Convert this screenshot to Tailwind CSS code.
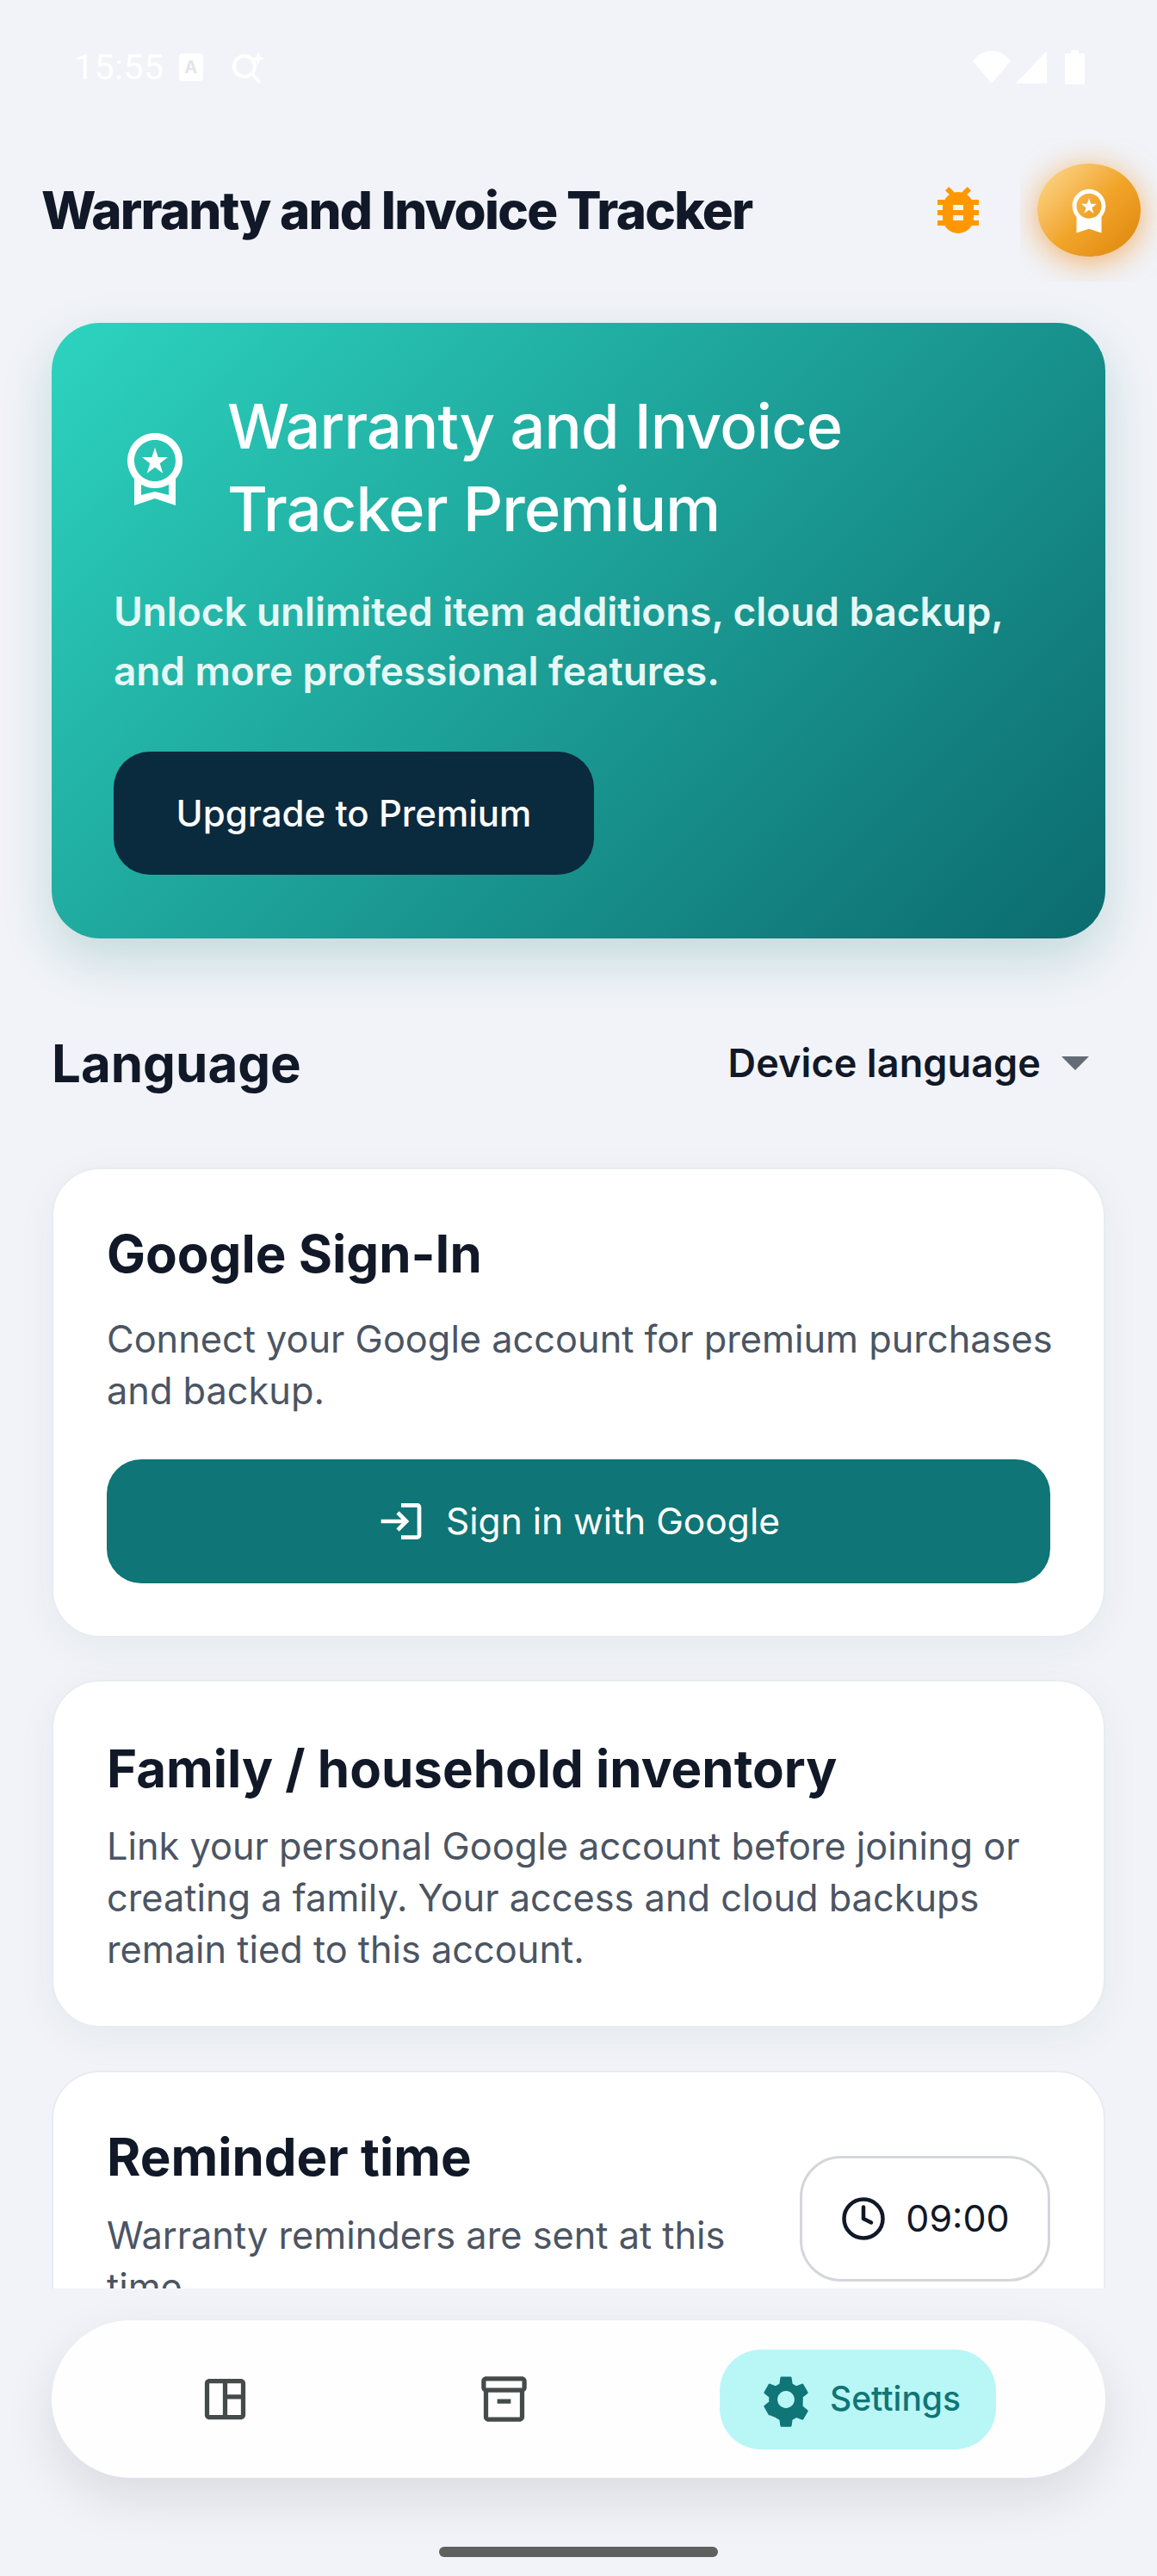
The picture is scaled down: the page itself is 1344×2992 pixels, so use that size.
<!DOCTYPE html>
<html lang="en">
<head>
    <meta charset="UTF-8">
    <meta name="viewport" content="width=device-width, initial-scale=1.0">
    <title>Warranty and Invoice Tracker</title>
    <script src="https://cdn.jsdelivr.net/npm/@tailwindcss/browser@4"></script>
</head>
<body class="font-['Inter',sans-serif] bg-[#f1f3f8]">
    <div class="w-[1344px] h-[2992px] flex flex-col overflow-hidden bg-[#f1f3f8]">
        <!-- status bar -->
        <div class="h-[160px] shrink-0 flex justify-between items-start pt-[58px] pl-[86px] pr-[84px] text-white">
            <div class="flex items-center h-[40px]">
                <span class="font-['Roboto',sans-serif] text-[41px] leading-[40px] tracking-[0.5px]">15:55</span>
                <div class="ml-[17px] w-[28px] h-[32px] rounded-[4px] bg-white flex items-center justify-center text-[#e3e5ea] text-[20px] font-bold leading-none">A</div>
                <svg class="ml-[33px] w-[40px] h-[40px]" viewBox="0 0 40 40" fill="none" stroke="white" stroke-width="4">
                    <circle cx="15" cy="19" r="12"></circle>
                    <path d="M24 28l9 10"></path>
                    <path d="M31 2l2 6 6 2-6 2-2 6-2-6-6-2 6-2z" fill="white" stroke="none"></path>
                </svg>
            </div>
            <div class="flex items-center h-[40px]">
                <svg class="w-[44px] h-[38px]" viewBox="0 0 44 38" fill="white"><path d="M0 12C6 4 14 0 22 0s16 4 22 12L22 38z"></path></svg>
                <svg class="ml-[6px] w-[36px] h-[38px]" viewBox="0 0 36 38" fill="white"><path d="M36 0v38H0z"></path></svg>
                <svg class="ml-[21px] w-[23px] h-[40px]" viewBox="0 0 23 40" fill="white"><path d="M7 0h9v4h5c1 0 2 1 2 2v32c0 1-1 2-2 2H2c-1 0-2-1-2-2V6c0-1 1-2 2-2h5z"></path></svg>
            </div>
        </div>

        <!-- header -->
        <header class="h-[167px] shrink-0 flex items-center justify-between pl-[48px]">
            <h1 class="text-[60px] leading-[72px] font-extrabold tracking-[-0.029em] text-[#111827]">Warranty and Invoice Tracker</h1>
            <div class="flex items-center h-full">
                <svg class="w-[72px] h-[72px] mr-[36px]" viewBox="0 0 24 24" fill="#ff9800"><path d="M20 8h-2.81c-.45-.78-1.07-1.45-1.82-1.96L17 4.41 15.59 3l-2.17 2.17C12.96 5.06 12.49 5 12 5c-.49 0-.96.06-1.41.17L8.41 3 7 4.41l1.62 1.63C7.88 6.55 7.26 7.22 6.81 8H4v2h2.09c-.05.33-.09.66-.09 1v1H4v2h2v1c0 .34.04.67.09 1H4v2h2.81c1.04 1.79 2.97 3 5.19 3s4.15-1.21 5.19-3H20v-2h-2.09c.05-.33.09-.66.09-1v-1h2v-2h-2v-1c0-.34-.04-.67-.09-1H20V8zm-6 8h-4v-2h4v2zm0-4h-4v-2h4v2z"></path></svg>
                <div class="w-[159px] h-full overflow-hidden flex items-center justify-center">
                    <div class="w-[120px] h-[108px] shrink-0 rounded-[50%] bg-linear-135 from-[#fcdc8e] via-[#f2a62a] to-[#dd8406] shadow-[0_6px_36px_rgba(245,140,20,0.65)] flex items-center justify-center">
                        <svg class="w-[58px] h-[58px]" viewBox="0 0 24 24" fill="white"><path d="M9.68 13.69 12 11.93l2.31 1.76-.88-2.85L15.75 9h-2.84L12 6.19 11.09 9H8.25l2.31 1.84-.88 2.85zM20 10c0-4.42-3.58-8-8-8s-8 3.58-8 8c0 2.03.76 3.87 2 5.28V23l6-2 6 2v-7.72c1.24-1.41 2-3.25 2-5.28zm-8-6c3.31 0 6 2.69 6 6s-2.69 6-6 6-6-2.69-6-6 2.69-6 6-6z"></path></svg>
                    </div>
                </div>
            </div>
        </header>

        <!-- scrolling content -->
        <main class="flex-1 overflow-hidden px-[60px] pt-[48px]">
            <section class="h-[715px] rounded-[56px] bg-linear-135 from-[#2dd4bf] to-[#0c6b6e] shadow-[0_24px_60px_rgba(15,118,110,0.2)] px-[72px] pt-[72px]">
                <div class="flex items-center">
                    <svg class="w-[96px] h-[96px] shrink-0" viewBox="0 0 24 24" fill="white"><path d="M9.68 13.69 12 11.93l2.31 1.76-.88-2.85L15.75 9h-2.84L12 6.19 11.09 9H8.25l2.31 1.84-.88 2.85zM20 10c0-4.42-3.58-8-8-8s-8 3.58-8 8c0 2.03.76 3.87 2 5.28V23l6-2 6 2v-7.72c1.24-1.41 2-3.25 2-5.28zm-8-6c3.31 0 6 2.69 6 6s-2.69 6-6 6-6-2.69-6-6 2.69-6 6-6zm0 15-4 1.02v-3.1c1.18.68 2.54 1.08 4 1.08s2.82-.4 4-1.08v3.1L12 19z"></path></svg>
                    <h2 class="ml-[36px] text-[72px] leading-[96px] font-medium tracking-[-0.012em] text-white">Warranty and Invoice<br>Tracker Premium</h2>
                </div>
                <p class="mt-[37px] text-[46px] leading-[69px] font-semibold text-[#e6f8f5] tracking-[-0.002em]">Unlock unlimited item additions, cloud backup,<br>and more professional features.</p>
                <button class="mt-[59px] w-[558px] h-[143px] rounded-[42px] bg-[#0a2a3e] text-white text-[42px] font-medium">Upgrade to Premium</button>
            </section>

            <div class="h-[122px] mt-[84px] flex items-center justify-between pr-[19px]">
                <h2 class="text-[60px] font-bold text-[#111827]">Language</h2>
                <div class="flex items-center">
                    <span class="text-[45px] font-semibold text-[#111827] tracking-[0.002em]">Device language</span>
                    <div class="ml-[24px] w-0 h-0 border-l-[16px] border-r-[16px] border-t-[16px] border-l-transparent border-r-transparent border-t-[#646b75]"></div>
                </div>
            </div>

            <section class="mt-[60px] h-[546px] rounded-[56px] bg-white border-2 border-[#e8ecf0] shadow-[0_12px_48px_rgba(15,60,60,0.05)] px-[62px] pt-[60px]">
                <h3 class="text-[60px] leading-[76px] font-bold text-[#111827]">Google Sign-In</h3>
                <p class="mt-[31px] text-[43.3px] leading-[60px] text-[#4b5563] whitespace-nowrap">Connect your Google account for premium purchases<br>and backup.</p>
                <button class="mt-[50px] w-full h-[144px] rounded-[40px] bg-[#0f7576] text-white text-[42.5px] flex items-center justify-center">
                    <svg class="w-[56px] h-[56px] mr-[24px]" viewBox="0 0 24 24" fill="white"><path d="M11 7L9.6 8.4l2.6 2.6H2v2h10.2l-2.6 2.6L11 17l5-5-5-5zm9 12h-8v2h8c1.1 0 2-.9 2-2V5c0-1.1-.9-2-2-2h-8v2h8v14z"></path></svg>
                    Sign in with Google
                </button>
            </section>

            <section class="mt-[49px] h-[404px] rounded-[56px] bg-white border-2 border-[#e8ecf0] shadow-[0_12px_48px_rgba(15,60,60,0.05)] px-[62px] pt-[63px]">
                <h3 class="text-[60px] leading-[76px] font-bold text-[#111827]">Family / household inventory</h3>
                <p class="mt-[22px] text-[43.3px] leading-[60px] text-[#4b5563]">Link your personal Google account before joining or creating a family. Your access and cloud backups remain tied to this account.</p>
            </section>

            <section class="mt-[50px] h-[400px] rounded-[56px] bg-white border-2 border-[#e8ecf0] px-[62px] pt-[60px]">
                <div class="flex items-center justify-between">
                    <div class="w-[760px]">
                        <h3 class="text-[60px] leading-[76px] font-bold text-[#111827]">Reminder time</h3>
                        <p class="mt-[23px] text-[43.3px] leading-[60px] text-[#4b5563]">Warranty reminders are sent at this time</p>
                    </div>
                    <button class="w-[291px] h-[146px] rounded-[48px] border-[3px] border-[#d4d6da] bg-white flex items-center justify-center text-[#111827] text-[43px]">
                        <svg class="w-[54px] h-[54px] mr-[22px]" viewBox="0 0 24 24" fill="none" stroke="#111827" stroke-width="2" stroke-linecap="round" stroke-linejoin="round"><circle cx="12" cy="12" r="10"></circle><path d="M12 6v6l4 2"></path></svg>
                        09:00
                    </button>
                </div>
            </section>
        </main>

        <!-- bottom nav -->
        <div class="h-[334px] shrink-0 flex flex-col items-center bg-[#f1f3f8] pt-[37px]">
            <nav class="w-[1224px] h-[183px] rounded-full bg-[#fefefe] shadow-[0_24px_60px_rgba(15,23,42,0.1)] flex items-center pl-[170px]">
                <svg class="w-[63px] h-[63px] shrink-0" viewBox="0 0 24 24" fill="#454b4a"><path d="M5 21c-1.1 0-2-.9-2-2V5c0-1.1.9-2 2-2h14c1.1 0 2 .9 2 2v14c0 1.1-.9 2-2 2H5zm0-2h6V5H5v14zm8 0h6v-7h-6v7zm0-9h6V5h-6v5z"></path></svg>
                <svg class="ml-[261px] w-[63px] h-[63px] shrink-0" viewBox="0 0 24 24" fill="#454b4a"><path d="M20 2H4c-1 0-2 .9-2 2v3.01c0 .72.43 1.34 1 1.69V20c0 1.1 1.1 2 2 2h14c.9 0 2-.9 2-2V8.7c.57-.35 1-.97 1-1.69V4c0-1.1-1-2-2-2zm-1 18H5V9h14v11zm1-13H4V4h16v3z"></path><path d="M9 12h6v2H9z"></path></svg>
                <div class="ml-[219px] w-[321px] h-[116px] rounded-[48px] bg-[#b9f6f6] flex items-center pl-[44px] text-[#0f7576] text-[39px] font-medium">
                    <svg class="w-[66px] h-[66px] shrink-0 mr-[18px]" viewBox="0 0 24 24" fill="#0f7576"><path d="M19.14 12.94c.04-.3.06-.61.06-.94 0-.32-.02-.64-.07-.94l2.03-1.58c.18-.14.23-.41.12-.61l-1.92-3.32c-.12-.22-.37-.29-.59-.22l-2.39.96c-.5-.38-1.03-.7-1.62-.94l-.36-2.54c-.04-.24-.24-.41-.48-.41h-3.84c-.24 0-.43.17-.47.41l-.36 2.54c-.59.24-1.13.57-1.62.94l-2.39-.96c-.22-.08-.47 0-.59.22L2.74 8.87c-.12.21-.08.47.12.61l2.03 1.58c-.05.3-.09.63-.09.94s.02.64.07.94l-2.03 1.58c-.18.14-.23.41-.12.61l1.92 3.32c.12.22.37.29.59.22l2.39.96c.5.38 1.03.7 1.62.94l.36 2.54c.05.24.24.41.48.41h3.84c.24 0 .44-.17.47-.41l.36-2.54c.59-.24 1.13-.56 1.62-.94l2.39.96c.22.08.47 0 .59-.22l1.92-3.32c.12-.22.07-.47-.12-.61l-2.01-1.58zM12 15.6c-1.98 0-3.6-1.62-3.6-3.6s1.62-3.6 3.6-3.6 3.6 1.62 3.6 3.6-1.62 3.6-3.6 3.6z"></path></svg>
                    Settings
                </div>
            </nav>
            <div class="mt-[80px] w-[324px] h-[12px] rounded-full bg-[#5f6060]"></div>
        </div>
    </div>
</body>
</html>
